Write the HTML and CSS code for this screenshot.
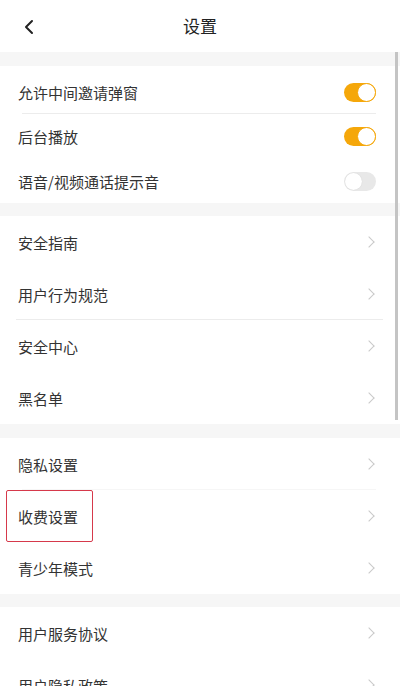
FILE: index.html
```html
<!DOCTYPE html>
<html lang="zh">
<head>
<meta charset="utf-8">
<link rel="stylesheet" href="styles.css">
</head>
<body>
<div class="page">
  <header class="topbar">
    <svg class="back" width="12" height="16" viewBox="0 0 12 16"><path d="M9 2 L3 8 L9 14" fill="none" stroke="#222" stroke-width="2" stroke-linecap="round" stroke-linejoin="round"/></svg>
    <div class="title">设置</div>
  </header>
  <div class="content">
    <section class="group g1">
      <div class="row first line"><span>允许中间邀请弹窗</span><span class="toggle on"><i></i></span></div>
      <div class="row r45"><span>后台播放</span><span class="toggle on"><i></i></span></div>
      <div class="row r44"><span>语音/视频通话提示音</span><span class="toggle"><i></i></span></div>
    </section>
    <section class="group">
      <div class="row"><span>安全指南</span><span class="chev"></span></div>
      <div class="row line wide"><span>用户行为规范</span><span class="chev"></span></div>
      <div class="row"><span>安全中心</span><span class="chev"></span></div>
      <div class="row"><span>黑名单</span><span class="chev"></span></div>
    </section>
    <section class="group g3">
      <div class="row line faint"><span>隐私设置</span><span class="chev"></span></div>
      <div class="row"><span class="mark">收费设置</span><span class="chev"></span></div>
      <div class="row"><span>青少年模式</span><span class="chev"></span></div>
    </section>
    <section class="group g4">
      <div class="row"><span>用户服务协议</span><span class="chev"></span></div>
      <div class="row"><span>用户隐私政策</span><span class="chev"></span></div>
    </section>
  </div>
  <div class="scrollbar"></div>
</div>
</body>
</html>
```
FILE: styles.css
```css
* { box-sizing: border-box; }
html, body { margin: 0; padding: 0; }
body {
  width: 400px;
  height: 686px;
  overflow: hidden;
  background: #f6f6f6;
  font-family: "Noto Sans CJK SC", "Noto Sans", sans-serif;
  color: #333;
}
.page { position: relative; width: 400px; height: 686px; overflow: hidden; }
.topbar {
  height: 52px;
  background: #fff;
  display: flex;
  align-items: center;
  justify-content: center;
  position: relative;
}
.back { position: absolute; left: 23px; top: 19px; }
.title { font-size: 17px; color: #222; margin-top: -1px; }
.content {
  display: flex;
  flex-direction: column;
  padding-top: 14px;
}
.group { background: #fff; display: flex; flex-direction: column; margin-bottom: 13px; }
.g3 { margin-top: 1px; }
.row {
  height: 52px;
  flex: none;
  display: flex;
  align-items: center;
  justify-content: space-between;
  padding: 0 24px 0 18px;
  font-size: 15px;
  position: relative;
}
.row.first { height: 48px; padding-top: 4px; }
.row.r45 { height: 45px; }
.row.r44 { height: 44px; }
.row.line::after {
  content: "";
  position: absolute;
  left: 22px;
  right: 24px;
  bottom: 0;
  height: 1px;
  background: #ececec;
}
.row.wide::after { left: 16px; right: 17px; }
.row.faint::after { background: #f6f6f6; }
.chev {
  width: 8px;
  height: 8px;
  border-top: 1.5px solid #c9c9c9;
  border-right: 1.5px solid #c9c9c9;
  transform: rotate(45deg);
  margin-right: 3px;
}
.toggle {
  width: 32px;
  height: 19px;
  border-radius: 10px;
  background: #e8e8e8;
  position: relative;
}
.toggle i {
  position: absolute;
  top: 1px;
  left: 1px;
  width: 17px;
  height: 17px;
  border-radius: 50%;
  background: #fff;
  box-shadow: 0 0 1px rgba(0,0,0,0.15);
}
.toggle.on { background: #f5a70a; }
.toggle.on i {
  left: auto;
  right: 0;
  top: 0;
  width: 19px;
  height: 19px;
  border: 1.5px solid #f5a70a;
  box-shadow: none;
}
.mark { position: relative; }
.mark::before {
  content: "";
  position: absolute;
  left: -12px;
  right: -15px;
  top: -16px;
  bottom: -15px;
  border: 1.5px solid #d6394b;
  border-radius: 2px;
}
.scrollbar {
  position: absolute;
  right: 2px;
  top: 52px;
  width: 3px;
  height: 368px;
  background: #c4c4c4;
}
```
